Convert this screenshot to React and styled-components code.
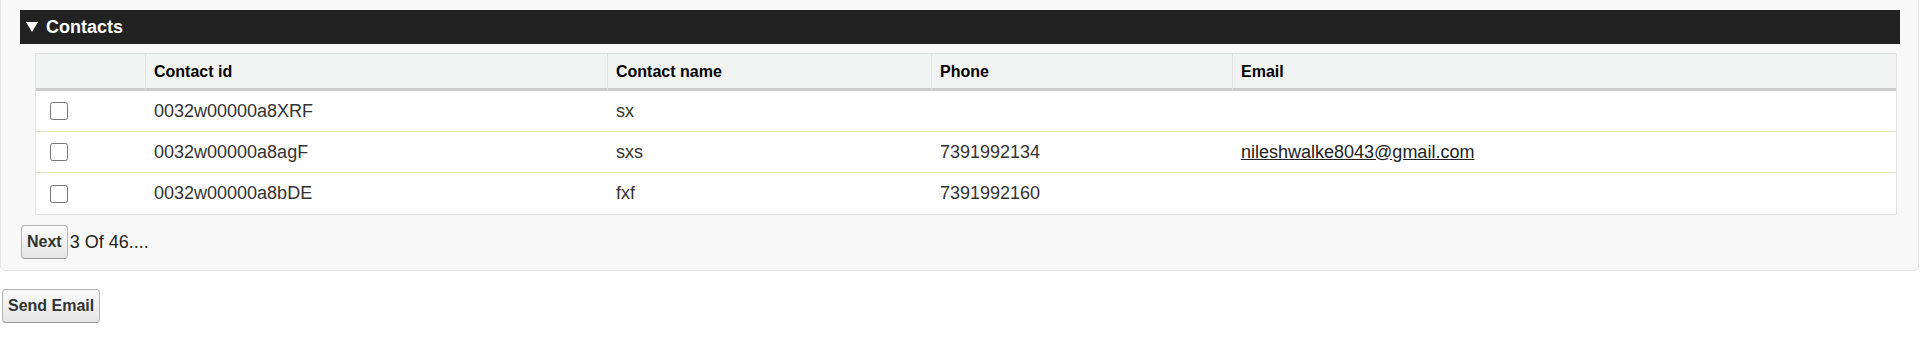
import styled, { createGlobalStyle } from 'styled-components'


const contacts = [
    { id: '0032w00000a8XRF', name: 'sx', phone: '', email: '' },
    { id: '0032w00000a8agF', name: 'sxs', phone: '7391992134', email: 'nileshwalke8043@gmail.com' },
    { id: '0032w00000a8bDE', name: 'fxf', phone: '7391992160', email: '' },
]

const columns = [
    { label: '', width: 109 },
    { label: 'Contact id', width: 462 },
    { label: 'Contact name', width: 324 },
    { label: 'Phone', width: 301 },
    { label: 'Email' },
]


const App = () => {

    return (
        <>
            <GlobalStyle />
            <Panel>
                <SectionBar>
                    <Caret />
                    <SectionTitle>Contacts</SectionTitle>
                </SectionBar>

                <TableWrap>
                    <Table>
                        <colgroup>
                            {columns.map((c, i) => (
                                <col key={i} style={c.width ? { width: c.width } : undefined} />
                            ))}
                        </colgroup>
                        <thead>
                            <tr>
                                {columns.map((c, i) => (
                                    <HeadCell key={i} $first={i === 0}>{c.label}</HeadCell>
                                ))}
                            </tr>
                        </thead>
                        <tbody>
                            {contacts.map((c, i) => {
                                const last = i === contacts.length - 1
                                return (
                                    <tr key={c.id}>
                                        <CheckCell $last={last}>
                                            <Check type="checkbox" />
                                        </CheckCell>
                                        <Cell $last={last}>{c.id}</Cell>
                                        <Cell $last={last}>{c.name}</Cell>
                                        <Cell $last={last}>{c.phone}</Cell>
                                        <Cell $last={last}>
                                            {c.email && <MailLink href="#">{c.email}</MailLink>}
                                        </Cell>
                                    </tr>
                                )
                            })}
                        </tbody>
                    </Table>
                </TableWrap>

                <Pager>
                    <Button>Next</Button>
                    <PageInfo>3 Of 46....</PageInfo>
                </Pager>
            </Panel>

            <SendButton>Send Email</SendButton>
        </>
    )
}


const GlobalStyle = createGlobalStyle`
    body {
        margin: 0;
        background: #ffffff;
        font-family: "Liberation Sans", Arial, sans-serif;
        color: #333;
    }
`

const Panel = styled.div`
    background: #f8f8f8;
    border: 1px solid #e6e6e6;
    border-top: none;
    border-radius: 0 0 5px 5px;
    margin-right: 1px;
    padding: 10px 18px 11px 19px;
`

const SectionBar = styled.div`
    display: flex;
    align-items: center;
    height: 34px;
    background: #222222;
    padding-left: 6px;
`

const Caret = styled.span`
    width: 0;
    height: 0;
    border-left: 6.5px solid transparent;
    border-right: 6.5px solid transparent;
    border-top: 10px solid #ffffff;
    margin-right: 8px;
`

const SectionTitle = styled.h3`
    margin: 0;
    color: #ffffff;
    font-size: 18px;
    font-weight: bold;
`

const TableWrap = styled.div`
    margin: 9px 3px 0 15px;
`

const Table = styled.table`
    width: 100%;
    table-layout: fixed;
    border-collapse: separate;
    border-spacing: 0;
    background: #ffffff;
    border: 1px solid #e0e3e5;
`

const HeadCell = styled.th`
    height: 37px;
    box-sizing: border-box;
    padding: 1px 8px 0;
    text-align: left;
    vertical-align: middle;
    font-size: 16px;
    font-weight: bold;
    color: #000;
    background: #f2f3f3;
    border-left: ${p => (p.$first ? 'none' : '1px solid #e0e3e5')};
    border-bottom: 3px solid #cccccc;
`

const Cell = styled.td`
    height: 41px;
    box-sizing: border-box;
    padding: 0 9px;
    vertical-align: middle;
    font-size: 18px;
    color: #333;
    white-space: nowrap;
    border-bottom: ${p => (p.$last ? 'none' : '1px solid #e3deb8')};
`

const CheckCell = styled(Cell)`
    padding: 0 0 0 14px;
`

const Check = styled.input`
    display: block;
    width: 18px;
    height: 18px;
    margin: 0;
`

const MailLink = styled.a`
    color: #222;
    text-decoration: underline;
`

const Pager = styled.div`
    display: flex;
    align-items: center;
    margin: 10px 0 0 1px;
`

const Button = styled.button`
    font-family: "Liberation Sans", Arial, sans-serif;
    font-size: 16px;
    font-weight: bold;
    line-height: 18px;
    color: #333;
    padding: 7px 5px;
    border: 1px solid #b5b5b5;
    border-bottom-color: #9a9a9a;
    border-radius: 4px;
    background: linear-gradient(#fbfbfb, #e6e6e6);
    cursor: pointer;
`

const PageInfo = styled.span`
    margin-left: 2px;
    font-size: 18px;
    color: #222;
`

const SendButton = styled(Button)`
    display: block;
    margin: 18px 0 0 2px;
`

export default App
